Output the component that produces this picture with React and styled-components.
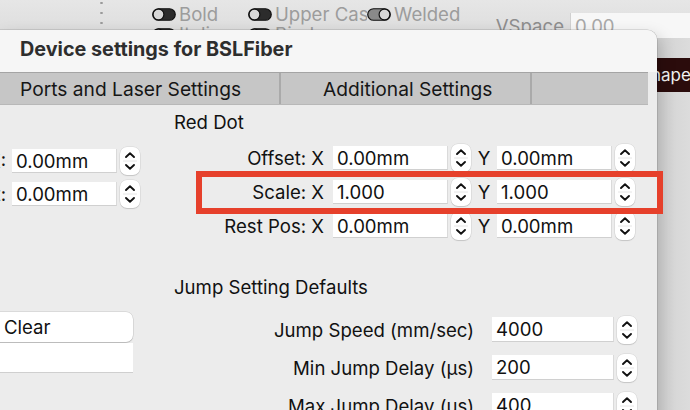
import styled, { createGlobalStyle } from "styled-components";

const GlobalStyle = createGlobalStyle`
  html, body {
    margin: 0;
    padding: 0;
    overflow: hidden;
  }
  body {
    font-family: Inter, "Liberation Sans", sans-serif;
    color: #111;
  }
`;

const Toggle = ({ on }) => (
  <svg width="24" height="13" viewBox="0 0 24 13">
    <rect x="0.75" y="0.75" width="22.5" height="11.5" rx="5.75" fill={on ? "#8a8a8a" : "#2c2c2c"} stroke="#111" strokeWidth="1.2" />
    <circle cx={on ? 17.5 : 6.5} cy="6.5" r="5.4" fill="#d8d8d8" stroke="#111" strokeWidth="1.2" />
  </svg>
);

const Spinner = () => (
  <SpinBox>
    <svg width="20" height="28" viewBox="0 0 20 28">
      <line x1="3" y1="14" x2="17" y2="14" stroke="#e6e6e6" strokeWidth="1" />
      <path d="M6 10 L10 6.3 L14 10" fill="none" stroke="#111" strokeWidth="1.9" strokeLinecap="round" strokeLinejoin="round" />
      <path d="M6 18 L10 21.7 L14 18" fill="none" stroke="#111" strokeWidth="1.9" strokeLinecap="round" strokeLinejoin="round" />
    </svg>
  </SpinBox>
);

const App = () => {
  return (
    <>
      <GlobalStyle />
      <Screen>
        <Toolbar>
          <Dots />
          <ToolGrid>
            <ToolItem $w={96}>
              <Toggle />
              <ToolText>Bold</ToolText>
            </ToolItem>
            <ToolItem $w={119}>
              <Toggle />
              <ToolText $clip={92}>Upper Case</ToolText>
            </ToolItem>
            <ToolItem>
              <Toggle on />
              <ToolText>Welded</ToolText>
            </ToolItem>
            <ToolItem $w={96}>
              <Toggle />
              <ToolText>Italic</ToolText>
            </ToolItem>
            <ToolItem $w={119}>
              <Toggle />
              <ToolText>Bind</ToolText>
            </ToolItem>
          </ToolGrid>
          <VSpaceGroup>
            <VSpaceLabel>VSpace</VSpaceLabel>
            <VSpaceInput>0.00</VSpaceInput>
          </VSpaceGroup>
        </Toolbar>
        <SidePanel>
          <ShapeRow>Shape</ShapeRow>
        </SidePanel>

        <Dialog>
          <TitleBar>Device settings for BSLFiber</TitleBar>
          <TabBar>
            <Tab $w={281} $pad={20}>Ports and Laser Settings</Tab>
            <Tab $w={251} $pad={42}>Additional Settings</Tab>
            <Tab />
          </TabBar>
          <Body>
            <LeftCol>
              <LeftRow>
                <CutLabel>Size X:</CutLabel>
                <Field $w={105}>0.00mm</Field>
                <Spinner />
              </LeftRow>
              <LeftRow>
                <CutLabel>Height:</CutLabel>
                <Field $w={105}>0.00mm</Field>
                <Spinner />
              </LeftRow>
              <ClearButton>Clear</ClearButton>
              <BlankField />
            </LeftCol>
            <RightCol>
              <SectionTitle>Red Dot</SectionTitle>
              <PairGrid>
                <PairRow>
                  <RowLabel>Offset: X</RowLabel>
                  <Field $w={115}>0.00mm</Field>
                  <Spinner />
                  <AxisLabel>Y</AxisLabel>
                  <Field $w={115}>0.00mm</Field>
                  <Spinner />
                </PairRow>
                <PairRow>
                  <RowLabel>Scale: X</RowLabel>
                  <Field $w={115}>1.000</Field>
                  <Spinner />
                  <AxisLabel>Y</AxisLabel>
                  <Field $w={115}>1.000</Field>
                  <Spinner />
                </PairRow>
                <PairRow>
                  <RowLabel>Rest Pos: X</RowLabel>
                  <Field $w={115}>0.00mm</Field>
                  <Spinner />
                  <AxisLabel>Y</AxisLabel>
                  <Field $w={115}>0.00mm</Field>
                  <Spinner />
                </PairRow>
              </PairGrid>
              <SectionTitle $top={39}>Jump Setting Defaults</SectionTitle>
              <JumpGrid>
                <JumpRow>
                  <JumpLabel>Jump Speed (mm/sec)</JumpLabel>
                  <Field $w={122} $h={25}>4000</Field>
                  <Spinner />
                </JumpRow>
                <JumpRow>
                  <JumpLabel>Min Jump Delay (µs)</JumpLabel>
                  <Field $w={122} $h={25}>200</Field>
                  <Spinner />
                </JumpRow>
                <JumpRow>
                  <JumpLabel>Max Jump Delay (µs)</JumpLabel>
                  <Field $w={122} $h={25}>400</Field>
                  <Spinner />
                </JumpRow>
              </JumpGrid>
            </RightCol>
          </Body>
        </Dialog>

        <Highlight />
      </Screen>
    </>
  );
};

const Screen = styled.div`
  position: relative;
  width: 690px;
  height: 410px;
  overflow: hidden;
  background: #d6d6d6;
  font-size: 18.6px;
`;

const Toolbar = styled.div`
  display: flex;
  height: 38px;
  background: linear-gradient(#e6e6e6, #dcdcdc);
`;

const Dots = styled.div`
  width: 3px;
  height: 30px;
  margin-left: 100px;
  background-image: radial-gradient(circle, #9a9a9a 1px, transparent 1.4px);
  background-size: 3px 10px;
  background-position: 0 -2px;
`;

const ToolGrid = styled.div`
  display: grid;
  grid-template-columns: auto auto auto;
  grid-auto-rows: 20px;
  align-content: start;
  margin-left: 49px;
  padding-top: 4px;
`;

const ToolItem = styled.div`
  display: flex;
  align-items: center;
  gap: 3px;
  width: ${(p) => (p.$w ? `${p.$w}px` : "auto")};
`;

const ToolText = styled.span`
  color: #9c9c9c;
  white-space: nowrap;
  overflow: hidden;
  max-width: ${(p) => (p.$clip ? `${p.$clip}px` : "none")};
`;

const VSpaceGroup = styled.div`
  display: flex;
  align-items: flex-start;
  margin-left: auto;
  padding-top: 13px;
  gap: 6px;
`;

const VSpaceLabel = styled.span`
  color: #8e8e8e;
  padding-top: 2px;
`;

const VSpaceInput = styled.div`
  width: 120px;
  height: 25px;
  box-sizing: border-box;
  padding: 2px 4px;
  background: #f7f7f7;
  border-left: 1px solid #d0d0d0;
  color: #a8a8a8;
`;

const SidePanel = styled.div`
  height: 372px;
  padding-top: 20px;
  box-sizing: border-box;
  background: linear-gradient(90deg, #cacaca 0%, #d4d4d4 96%, #dcdcdc 100%);
`;

const ShapeRow = styled.div`
  height: 34px;
  margin-left: 560px;
  padding-left: 80px;
  display: flex;
  align-items: center;
  background: #2b0c0c;
  color: #f2f2f2;
  font-size: 17px;
`;

const Dialog = styled.div`
  position: absolute;
  left: 0;
  top: 30px;
  width: 657px;
  height: 400px;
  display: flex;
  flex-direction: column;
  background: #ececec;
  border-top-right-radius: 10px;
  box-shadow: 0 0 0 0.5px rgba(0, 0, 0, 0.2), 4px 6px 16px rgba(0, 0, 0, 0.18);
  overflow: hidden;
`;

const TitleBar = styled.div`
  height: 42px;
  box-sizing: border-box;
  padding: 7px 0 0 20px;
  line-height: 24px;
  background: #f6f6f6;
  font-size: 19.8px;
  font-weight: 700;
  color: #2e2e2e;
`;

const TabBar = styled.div`
  display: flex;
  height: 33px;
  margin-right: 9px;
  box-sizing: border-box;
  background: #c6c6c6;
  border-top: 1px solid #a4a4a4;
  border-bottom: 1px solid #b8b8b8;
`;

const Tab = styled.div`
  display: flex;
  align-items: center;
  width: ${(p) => (p.$w ? `${p.$w}px` : "auto")};
  flex: ${(p) => (p.$w ? "none" : "1")};
  padding-left: ${(p) => p.$pad || 0}px;
  box-sizing: border-box;
  border-right: 2px solid #aaaaaa;
  font-size: 19.2px;
  color: #161616;
  white-space: nowrap;
  &:last-child {
    border-right: none;
  }
`;

const Body = styled.div`
  display: flex;
  flex: 1;
`;

const LeftCol = styled.div`
  display: flex;
  flex-direction: column;
  width: 140px;
  padding-top: 44px;
`;

const LeftRow = styled.div`
  display: flex;
  align-items: center;
  height: 24px;
  margin-bottom: 9px;
`;

const CutLabel = styled.div`
  display: flex;
  justify-content: flex-end;
  width: 6px;
  margin-right: 6px;
  overflow: hidden;
  white-space: nowrap;
`;

const Field = styled.div`
  width: ${(p) => p.$w}px;
  height: ${(p) => p.$h || 24}px;
  box-sizing: border-box;
  padding: 0 4px;
  display: flex;
  align-items: center;
  background: #fff;
  border-right: 1px solid #dadada;
  border-bottom: 1px solid #d0d0d0;
  color: #111;
`;

const SpinBox = styled.div`
  display: flex;
  width: 20px;
  height: 28px;
  margin-left: 3px;
  border-radius: 7px;
  background: #fff;
  box-shadow: 0 0 0 0.5px rgba(0, 0, 0, 0.1), 0 1px 1px rgba(0, 0, 0, 0.12);
`;

const ClearButton = styled.div`
  width: 143px;
  height: 30px;
  margin: 97px 0 0 -10px;
  padding-left: 14px;
  box-sizing: border-box;
  display: flex;
  align-items: center;
  background: #fff;
  border-radius: 7px;
  box-shadow: 0 0 0 0.5px rgba(0, 0, 0, 0.15), 0 1px 1px rgba(0, 0, 0, 0.15);
`;

const BlankField = styled.div`
  width: 133px;
  height: 29px;
  margin-top: 1px;
  background: #fff;
  border-bottom: 1px solid #cfcfcf;
`;

const RightCol = styled.div`
  display: flex;
  flex-direction: column;
  margin-left: 34px;
  padding-top: 7px;
`;

const SectionTitle = styled.div`
  height: 20px;
  line-height: 20px;
  margin-top: ${(p) => p.$top || 0}px;
`;

const PairGrid = styled.div`
  display: flex;
  flex-direction: column;
  gap: 10px;
  margin-top: 14px;
`;

const PairRow = styled.div`
  display: flex;
  align-items: center;
  height: 24px;
`;

const RowLabel = styled.div`
  width: 150px;
  margin-right: 9px;
  text-align: right;
  white-space: nowrap;
`;

const AxisLabel = styled.div`
  width: 26px;
  text-align: center;
`;

const JumpGrid = styled.div`
  display: flex;
  flex-direction: column;
  gap: 13px;
  margin-top: 20px;
`;

const JumpRow = styled.div`
  display: flex;
  align-items: center;
  height: 25px;
`;

const JumpLabel = styled.div`
  width: 300px;
  margin-right: 18px;
  text-align: right;
  white-space: nowrap;
`;

const Highlight = styled.div`
  position: absolute;
  left: 196px;
  top: 171px;
  width: 467px;
  height: 43px;
  box-sizing: border-box;
  border: 6px solid #e6402b;
  pointer-events: none;
`;

export default App;
